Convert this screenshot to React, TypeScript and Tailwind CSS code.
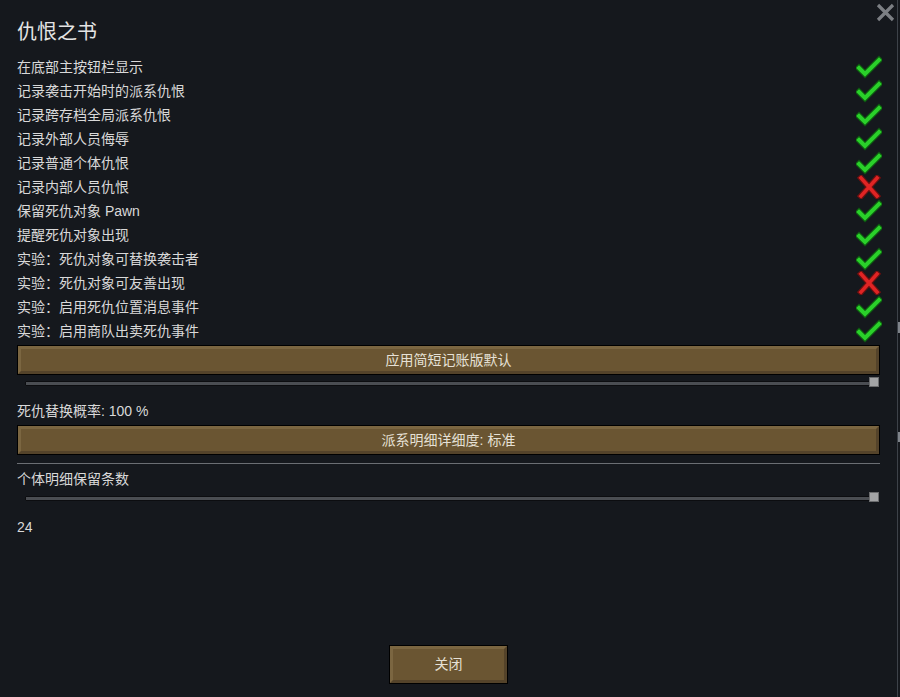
import { FC } from "react";

const rows: [string, boolean][] = [
  ["在底部主按钮栏显示", true],
  ["记录袭击开始时的派系仇恨", true],
  ["记录跨存档全局派系仇恨", true],
  ["记录外部人员侮辱", true],
  ["记录普通个体仇恨", true],
  ["记录内部人员仇恨", false],
  ["保留死仇对象 Pawn", true],
  ["提醒死仇对象出现", true],
  ["实验：死仇对象可替换袭击者", true],
  ["实验：死仇对象可友善出现", false],
  ["实验：启用死仇位置消息事件", true],
  ["实验：启用商队出卖死仇事件", true],
];

const Check: FC = () => (
  <svg width="26" height="24" viewBox="0 0 26 24">
    <polyline points="3,13 9,19 23,5" fill="none" stroke="#0e5a10" strokeWidth="6.5" strokeLinecap="square" />
    <polyline points="3,13 9,19 23,5" fill="none" stroke="#2ad02a" strokeWidth="4" strokeLinecap="square" />
  </svg>
);

const Cross: FC = () => (
  <svg width="26" height="24" viewBox="0 0 26 24">
    <g fill="none" strokeLinecap="square">
      <path d="M5,3 L21,21 M21,3 L5,21" stroke="#6a1010" strokeWidth="6" />
      <path d="M5,3 L21,21 M21,3 L5,21" stroke="#e02424" strokeWidth="3.6" />
    </g>
  </svg>
);

const WoodButton: FC<{ label: string; className?: string }> = ({ label, className = "" }) => (
  <div className={`border border-black bg-[#4f3f26] ${className}`}>
    <div className="h-full border-t-[3px] border-l-[3px] border-t-[#7b6641] border-l-[#7b6641] border-b-[3px] border-r-[3px] border-b-[#54432a] border-r-[#54432a] bg-[#6a5532] flex items-center justify-center text-[14px] text-[#e6e1d6]">
      {label}
    </div>
  </div>
);

const Slider: FC = () => (
  <div className="relative h-[18px] flex items-start pl-[8px] pr-[3px]">
    <div className="flex-1 mt-[6px] h-[5px] bg-[#4a4d52] border border-[#0c0d10] rounded-[1px]" />
    <div className="absolute right-[1px] top-[2px] w-[10px] h-[10px] bg-[#a3a4a6] border border-[#6b6c6e]" />
  </div>
);

export default function App() {
  return (
    <div
      className="relative w-[900px] h-[697px] bg-[#15181d] text-[#d9d9d9] overflow-hidden flex flex-col pl-[17px] pr-[20px]"
      style={{ fontFamily: '"Liberation Sans", "Noto Sans CJK SC", sans-serif' }}
    >
      <div className="absolute right-0 top-0 h-full w-[3px] bg-[#15181d] border-l border-[#3d4249]">
        <div className="absolute left-0 top-[322px] w-[2px] h-[11px] bg-[#7e838a]" />
        <div className="absolute left-0 top-[432px] w-[2px] h-[10px] bg-[#7e838a]" />
      </div>
      <svg className="absolute right-[5px] top-[3px]" width="19" height="19" viewBox="0 0 19 19">
        <path d="M2,2 L17,17 M17,2 L2,17" stroke="#7c7f84" strokeWidth="3.2" />
      </svg>

      <div className="h-[55px] pt-[19px] leading-[26px] text-[20px] text-[#e4e4e4]">仇恨之书</div>

      <div className="flex flex-col">
        {rows.map(([label, on]) => (
          <div key={label} className="h-[24px] flex items-center justify-between text-[14px]">
            <span>{label}</span>
            <span className="mr-[-2px]">{on ? <Check /> : <Cross />}</span>
          </div>
        ))}
      </div>

      <WoodButton label="应用简短记账版默认" className="mt-[2px] h-[30px]" />
      <Slider />

      <div className="h-[32px] pt-[5px] leading-[26px] text-[14px]">死仇替换概率: 100 %</div>
      <WoodButton label="派系明细详细度: 标准" className="h-[30px]" />

      <div className="mt-[8px] h-px bg-[#6b6e73]" />

      <div className="h-[26px] pt-[3px] leading-[24px] text-[14px]">个体明细保留条数</div>
      <Slider />
      <div className="h-[38px] flex items-center text-[14px]">24</div>

      <div className="flex-1" />
      <div className="flex justify-center mb-[13px]">
        <WoodButton label="关闭" className="w-[119px] h-[39px]" />
      </div>
    </div>
  );
}
